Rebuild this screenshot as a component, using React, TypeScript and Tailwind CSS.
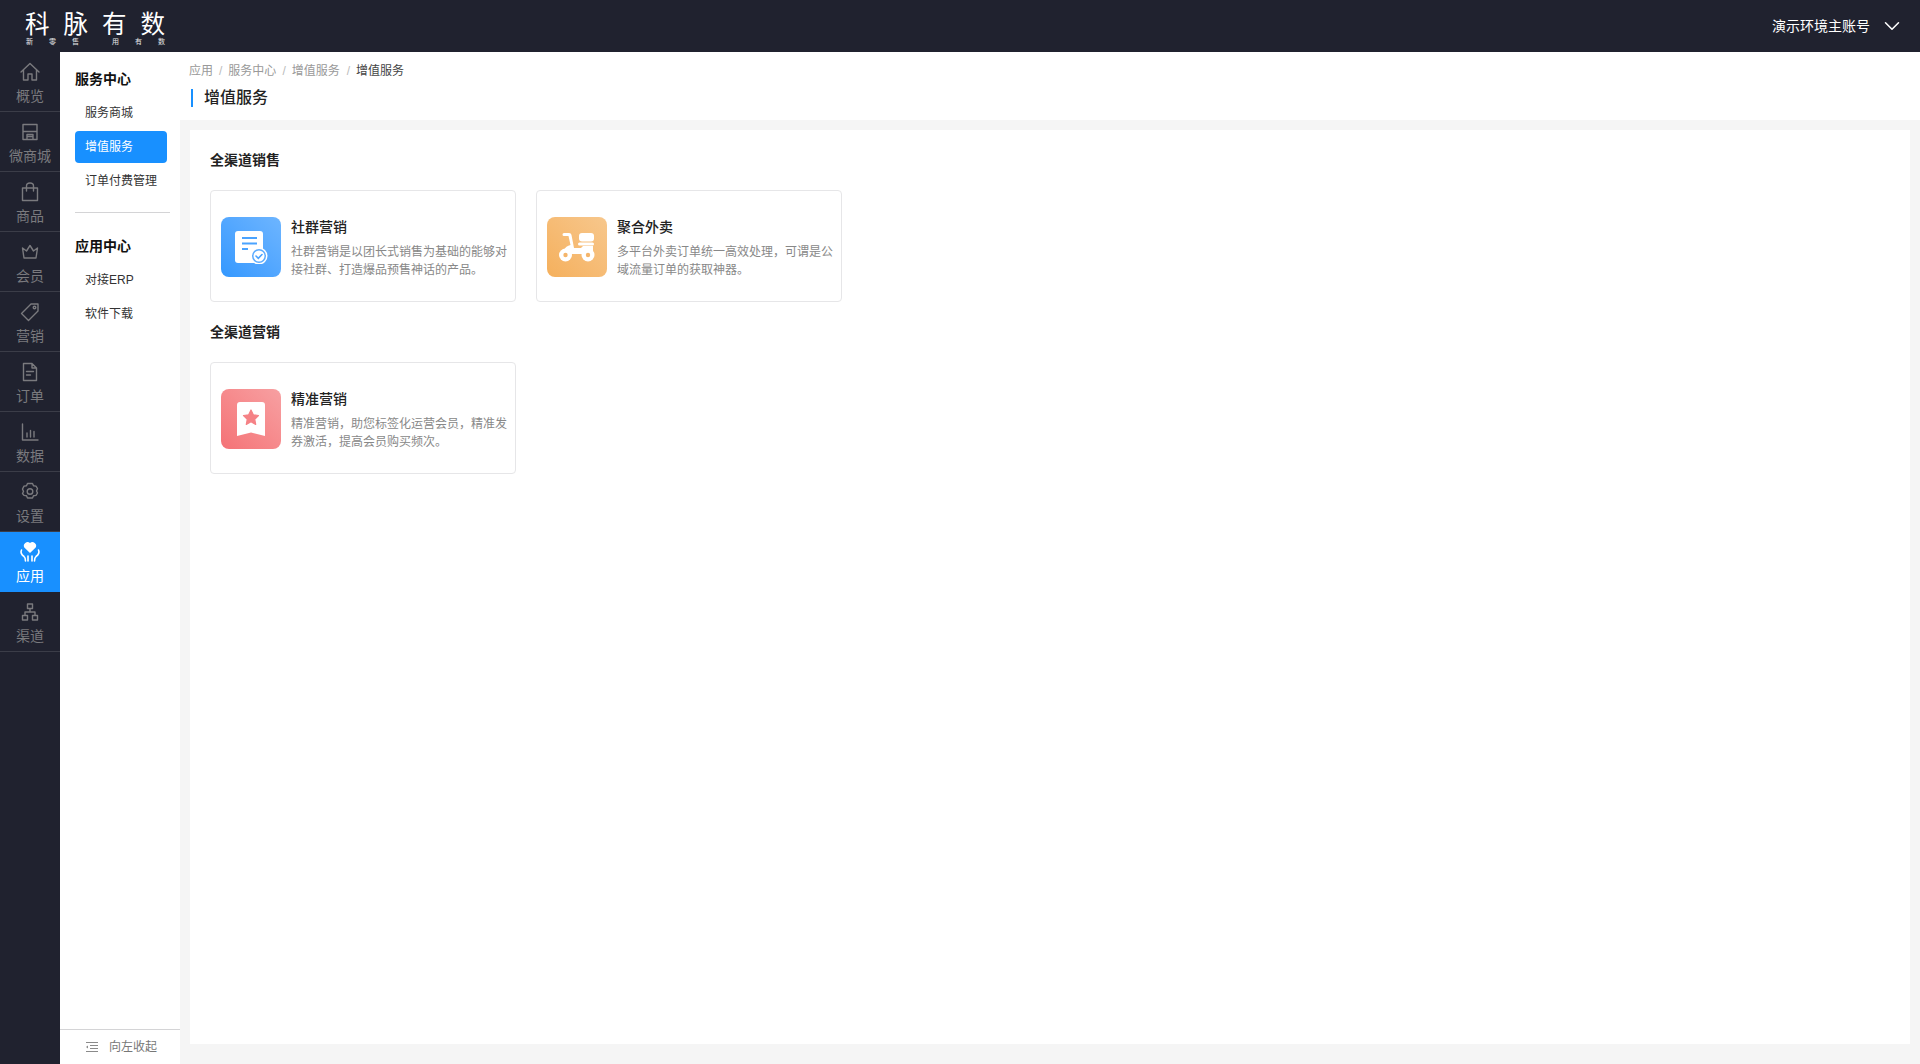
import { ChevronDown } from "lucide-react";
import type { ReactNode } from "react";

const FONT = "font-['Liberation_Sans','Noto_Sans_CJK_SC',sans-serif]";

const stroke = {
  fill: "none",
  stroke: "currentColor",
  strokeWidth: 1.4,
  strokeLinejoin: "round" as const,
  strokeLinecap: "round" as const,
};

function Glyph({ children }: { children: ReactNode }) {
  return (
    <svg width="20" height="20" viewBox="0 0 20 20" {...stroke}>
      {children}
    </svg>
  );
}

const railItems: { label: string; icon: ReactNode; active?: boolean }[] = [
  {
    label: "概览",
    icon: (
      <Glyph>
        <path d="M1 10 10 1.500 19 10M3.500 8v10h4.500v-6h4v6h4.500V8" />
      </Glyph>
    ),
  },
  {
    label: "微商城",
    icon: (
      <Glyph>
        <path d="M3 2.500h14v15H3zM3 9.500h14M7 17.500v-5h6v5M7 14.500h6" />
      </Glyph>
    ),
  },
  {
    label: "商品",
    icon: (
      <Glyph>
        <path d="M2.500 6h15v12.500h-15zM6.500 9V4a3.500 3 0 0 1 7 0v5" />
      </Glyph>
    ),
  },
  {
    label: "会员",
    icon: (
      <Glyph>
        <path d="M4 16 2.500 6l4 3 3.500-5.500L13.500 9l4-3L16 16z" />
      </Glyph>
    ),
  },
  {
    label: "营销",
    icon: (
      <Glyph>
        <path d="M11 2h7v7l-9.500 9.500-7-7z" />
        <circle cx="14.500" cy="5.500" r="1.300" />
      </Glyph>
    ),
  },
  {
    label: "订单",
    icon: (
      <Glyph>
        <path d="M3.500 1.500h8.500l4.500 4.500v12.500h-13zM12 1.500V6h4.500M6.500 9.500h7M6.500 13h4" />
      </Glyph>
    ),
  },
  {
    label: "数据",
    icon: (
      <Glyph>
        <path d="M2.500 2v16h15.500M7 15v-4M10.500 15V8.500M14 15v-5.500" />
      </Glyph>
    ),
  },
  {
    label: "设置",
    icon: (
      <Glyph>
        <path d="M7.500 1.500h5l1 2.300 2.500.3 1.500 2.400-1 2.500 1 2 -1.500 2.400-2.500.3-1 2.300h-5l-1-2.300-2.500-.3L2.500 11.500l1-2-1-2.500L4 4.100l2.500-.3z" />
        <circle cx="10" cy="9.500" r="2.800" />
      </Glyph>
    ),
  },
  {
    label: "应用",
    active: true,
    icon: (
      <svg width="24" height="24" viewBox="0 0 24 24" fill="none">
        <path
          d="M12 13 6.300 7.500A3.700 3.700 0 0 1 12 3a3.700 3.700 0 0 1 5.700 4.500z"
          fill="#fff"
        />
        <path
          d="M3.500 10c-1.500 3 .5 5 2.500 6.500 1 .8 1.500 2 1.500 4.500M20.500 10c1.500 3-.5 5-2.500 6.500-1 .8-1.500 2-1.500 4.500"
          stroke="#fff"
          strokeWidth="1.600"
          strokeLinecap="round"
        />
        <path
          d="M10 16v5M14 16v5"
          stroke="#fff"
          strokeWidth="1.600"
          strokeLinecap="round"
        />
      </svg>
    ),
  },
  {
    label: "渠道",
    icon: (
      <Glyph>
        <path d="M7.500 2h5v4.500h-5zM2.500 13.500h5V18h-5zM12.500 13.500h5V18h-5zM10 6.500V10M5 13.500V10h10v3.500" />
      </Glyph>
    ),
  },
];

function Logo() {
  return (
    <div className="flex w-[180px] flex-col pl-[25px] text-white">
      <div className="flex h-[32px] items-center gap-[14px] pt-[8px] text-[24.500px] leading-none font-normal">
        <span>科</span>
        <span>脉</span>
        <span>有</span>
        <span>数</span>
      </div>
      <div className="flex gap-[16px] pl-[1px] text-[7px] leading-[10px] text-white/90">
        <span>新</span>
        <span>零</span>
        <span>售</span>
        <span className="ml-[17px]">用</span>
        <span>有</span>
        <span>数</span>
      </div>
    </div>
  );
}

function Rail() {
  return (
    <aside className="flex w-[60px] shrink-0 flex-col bg-[#20222f]">
      {railItems.map((item) => (
        <div
          key={item.label}
          className={
            item.active
              ? "flex h-[60px] flex-col items-center pt-[10px] text-white bg-[#1890ff]"
              : "flex h-[60px] flex-col items-center border-b border-[#3b3d48] pt-[10px] text-[#7a7a7e]"
          }
        >
          <div className="flex h-[20px] items-center">{item.icon}</div>
          <span className="mt-[4px] text-[14px] leading-[20px]">{item.label}</span>
        </div>
      ))}
    </aside>
  );
}

function SubLink({ label, active }: { label: string; active?: boolean }) {
  return (
    <div
      className={
        active
          ? "mb-[2px] flex h-[32px] w-[92px] items-center rounded-[4px] bg-[#1890ff] pl-[10px] text-[12px] text-white"
          : "mb-[2px] flex h-[32px] w-[92px] items-center pl-[10px] text-[12px] text-[#333]"
      }
    >
      {label}
    </div>
  );
}

function SubMenu() {
  return (
    <aside className="flex w-[120px] shrink-0 flex-col bg-white">
      <div className="flex-1 pl-[15px] pt-[17px]">
        <h3 className="mb-[8px] h-[20px] text-[14px] leading-[20px] font-bold text-[#111]">服务中心</h3>
        <SubLink label="服务商城" />
        <SubLink label="增值服务" active />
        <SubLink label="订单付费管理" />
        <div className="mt-[15px] mb-[23px] h-px w-[95px] bg-[#d4d4d6]" />
        <h3 className="mb-[8px] h-[20px] text-[14px] leading-[20px] font-bold text-[#111]">应用中心</h3>
        <SubLink label="对接ERP" />
        <SubLink label="软件下载" />
      </div>
      <div className="flex h-[35px] items-center border-t border-[#d4d4d6] pl-[25px] text-[12px] text-[#777]">
        <svg width="13" height="12" viewBox="0 0 13 12" fill="none" stroke="#8a8a8a" strokeWidth="1">
          <path d="M1 1.500h12M5 4.500h8M5 7.500h8M1 10.500h12" />
          <path d="M3 4.500v3L1 6z" fill="#8a8a8a" stroke="none" />
        </svg>
        <span className="ml-[11px]">向左收起</span>
      </div>
    </aside>
  );
}

function ServiceCard({
  title,
  lines,
  gradient,
  icon,
}: {
  title: string;
  lines: string[];
  gradient: string;
  icon: ReactNode;
}) {
  return (
    <div className="flex h-[112px] w-[306px] items-center rounded-[4px] border border-[#e6e6e8] bg-white pl-[10px] pt-[2px]">
      <div className={`flex size-[60px] shrink-0 items-center justify-center rounded-[8px] ${gradient}`}>{icon}</div>
      <div className="ml-[10px] pt-[2px]">
        <div className="h-[20px] text-[14px] leading-[20px] font-medium text-[#222]">{title}</div>
        <div className="mt-[6px] text-[12px] leading-[18px] whitespace-nowrap text-[#888]">
          {lines.map((line) => (
            <div key={line}>{line}</div>
          ))}
        </div>
      </div>
    </div>
  );
}

const blueIcon = (
  <svg width="34" height="34" viewBox="0 0 34 34">
    <rect x="1" y="1" width="28" height="32" rx="3" fill="#fff" />
    <path d="M8 8h15M8 13.500h15M8 19h6" stroke="#4aa3ff" strokeWidth="2" />
    <circle cx="25" cy="26" r="8.500" fill="#fff" />
    <circle cx="25" cy="26" r="7" fill="#5aabff" />
    <circle cx="25" cy="26" r="5.500" fill="#fff" />
    <path d="m22 26 2.300 2.300 3.700-3.800" fill="none" stroke="#4aa3ff" strokeWidth="1.600" strokeLinecap="round" />
  </svg>
);

const orangeIcon = (
  <svg width="38" height="30" viewBox="0 0 38 30">
    <rect x="21" y="1" width="15" height="8.500" rx="3" fill="#fff" />
    <rect x="20" y="10.500" width="16" height="3" rx="1.500" fill="#fff" />
    <path
      d="M6 1h5c1.500 0 2.200.8 2.500 2l2.500 13h7l2-2h10v5l1 3H6v-4c1-2.500 3.500-4.500 6.500-5L10.500 4H6a1.500 1.500 0 0 1 0-3z"
      fill="#fff"
    />
    <circle cx="7.500" cy="23" r="6.500" fill="#fff" />
    <circle cx="7.500" cy="23" r="2.200" fill="#f5b56a" />
    <circle cx="30" cy="23" r="6.500" fill="#fff" />
    <circle cx="30" cy="23" r="2.200" fill="#f5b56a" />
  </svg>
);

const redIcon = (
  <svg width="28" height="34" viewBox="0 0 28 34">
    <path d="M3 0h22a3 3 0 0 1 3 3v31l-14-3.500L0 34V3a3 3 0 0 1 3-3z" fill="#fff" />
    <path
      d="m14 8 2.300 4.800 5.200.7-3.800 3.700 1 5.200-4.700-2.600-4.700 2.600 1-5.200-3.800-3.700 5.200-.7z"
      fill="#f58286"
      stroke="#f58286"
      strokeWidth="1.200"
      strokeLinejoin="round"
    />
  </svg>
);

export default function App() {
  return (
    <div className={`flex h-[1064px] w-[1920px] flex-col overflow-hidden bg-[#f5f5f5] ${FONT}`}>
      <header className="flex h-[52px] shrink-0 items-center justify-between bg-[#20222f] pr-[15px]">
        <Logo />
        <div className="flex items-center text-[14px] text-white">
          <span>演示环境主账号</span>
          <ChevronDown className="ml-[9px]" size={26} strokeWidth={1.4} />
        </div>
      </header>
      <div className="flex min-h-0 flex-1">
        <Rail />
        <SubMenu />
        <main className="flex min-w-0 flex-1 flex-col">
          <div className="flex h-[68px] shrink-0 flex-col bg-white pl-[9px]">
            <div className="flex h-[37px] items-center gap-[6px] text-[12px] text-[#999]">
              <span>应用</span>
              <span className="text-[#bbb]">/</span>
              <span>服务中心</span>
              <span className="text-[#bbb]">/</span>
              <span>增值服务</span>
              <span className="ml-[1px] text-[#bbb]">/</span>
              <span className="text-[#444]">增值服务</span>
            </div>
            <div className="ml-[2px] flex h-[18px] items-center border-l-2 border-[#1890ff] pl-[11px] text-[16px] font-medium text-[#222]">
              增值服务
            </div>
          </div>
          <div className="mx-[10px] mt-[10px] mb-[20px] flex-1 bg-white pl-[20px] pt-[20px]">
            <h4 className="h-[20px] text-[14px] leading-[20px] font-bold text-[#222]">全渠道销售</h4>
            <div className="mt-[20px] flex gap-[20px]">
              <ServiceCard
                title="社群营销"
                lines={["社群营销是以团长式销售为基础的能够对", "接社群、打造爆品预售神话的产品。"]}
                gradient="bg-gradient-to-tr from-[#3398ff] to-[#6db5ff]"
                icon={blueIcon}
              />
              <ServiceCard
                title="聚合外卖"
                lines={["多平台外卖订单统一高效处理，可谓是公", "域流量订单的获取神器。"]}
                gradient="bg-gradient-to-tr from-[#f5b05c] to-[#f7c78c]"
                icon={orangeIcon}
              />
            </div>
            <h4 className="mt-[20px] h-[20px] text-[14px] leading-[20px] font-bold text-[#222]">全渠道营销</h4>
            <div className="mt-[20px] flex gap-[20px]">
              <ServiceCard
                title="精准营销"
                lines={["精准营销，助您标签化运营会员，精准发", "券激活，提高会员购买频次。"]}
                gradient="bg-gradient-to-tr from-[#f47276] to-[#f7a0a2]"
                icon={redIcon}
              />
            </div>
          </div>
        </main>
      </div>
    </div>
  );
}
